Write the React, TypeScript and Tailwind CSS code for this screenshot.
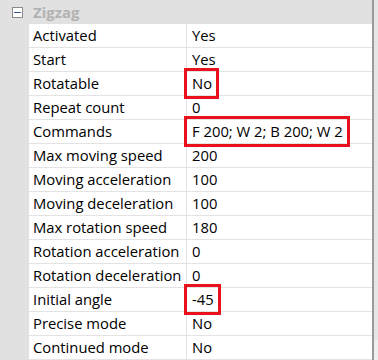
import React from "react";

const rows: [string, string, boolean?][] = [
  ["Activated", "Yes"],
  ["Start", "Yes"],
  ["Rotatable", "No", true],
  ["Repeat count", "0"],
  ["Commands", "F 200; W 2; B 200; W 2", true],
  ["Max moving speed", "200"],
  ["Moving acceleration", "100"],
  ["Moving deceleration", "100"],
  ["Max rotation speed", "180"],
  ["Rotation acceleration", "0"],
  ["Rotation deceleration", "0"],
  ["Initial angle", "-45", true],
  ["Precise mode", "No"],
  ["Continued mode", "No"],
];

export default function App() {
  return (
    <div
      className="flex w-[378px] h-[360px] overflow-hidden bg-white text-[14.8px] text-black"
      style={{ fontFamily: '"Open Sans", "Noto Sans", sans-serif' }}
    >
      <div className="w-[372px] flex flex-col">
        <div className="h-[24px] bg-[#e1e1e1] flex items-center">
          <div className="ml-[12px] w-[11px] h-[11px] border border-[#8a8a8a] bg-white flex items-center justify-center">
            <div className="w-[7px] h-[1px] bg-[#3b5998]" />
          </div>
          <span className="ml-[10px] font-bold text-[15px] text-[#b2b2b2]">Zigzag</span>
        </div>
        {rows.map(([name, value, mark]) => (
          <div key={name} className="h-[24px] flex">
            <div className="w-[29px] bg-[#e1e1e1]" />
            <div className="w-[158px] border-b border-r border-[#e3e3e3] flex items-center pl-[4px] whitespace-nowrap">
              {name}
            </div>
            <div className="flex-1 border-b border-[#e3e3e3] flex items-center pl-[5px] whitespace-nowrap">
              <span className="relative">
                {value}
                {mark && (
                  <span className="absolute -left-[8px] -right-[7px] -top-[4px] -bottom-[4px] border-[3px] border-[#e8121c]" />
                )}
              </span>
            </div>
          </div>
        ))}
      </div>
      <div className="w-[2px] bg-[#9a9a9a]" />
      <div className="flex-1 bg-[#f0f0f0] flex flex-col">
        <div className="h-[340px] bg-[#e6e6e6]" />
      </div>
    </div>
  );
}
